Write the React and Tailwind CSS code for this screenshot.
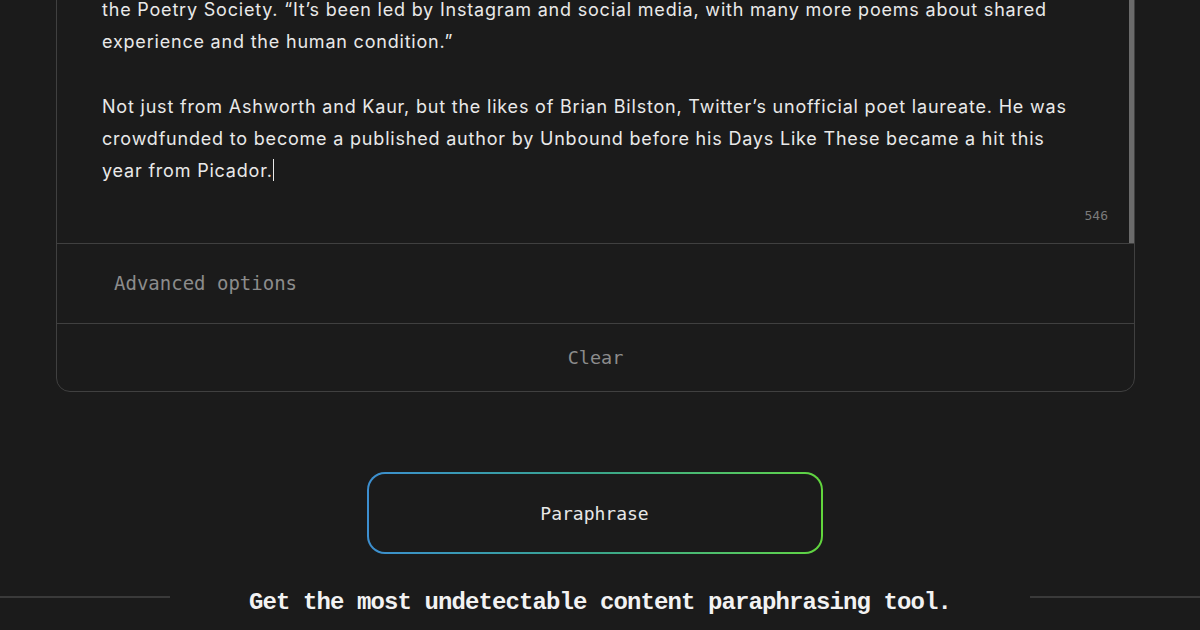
import React from 'react';

const mono = "font-['DejaVu_Sans_Mono','Liberation_Mono',monospace]";

export default function App() {
  return (
    <div className="w-[1200px] h-[630px] overflow-hidden bg-[#1b1b1b] font-['Inter','Noto_Sans',sans-serif]">
      <div className="ml-[56px] w-[1079px] -mt-[60px]">
        {/* editor panel */}
        <div className="rounded-b-[14px] border border-[#404040] bg-[#1b1b1b]">
          <div className="relative border-b border-[#404040] pl-[45px] pr-[30px] pt-[53px] pb-[56px]">
            <div className="text-[18px] leading-[32px] tracking-[0.8px] text-[#e9e9e9] whitespace-nowrap">
              <p>
                the Poetry Society. “It’s been led by Instagram and social media, with many more poems about shared
                <br />
                experience and the human condition.”
              </p>
              <p className="mt-[33px]">
                Not just from Ashworth and Kaur, but the likes of Brian Bilston, Twitter’s unofficial poet laureate. He was
                <br />
                crowdfunded to become a published author by Unbound before his Days Like These became a hit this
                <br />
                year from Picador.<span className="inline-block w-px h-[22px] bg-[#e9e9e9] align-[-4px]"></span>
              </p>
            </div>
            <span className={`absolute right-[26px] bottom-[18px] text-[13px] text-[#7a7a7a] ${mono}`}>546</span>
            <div className="absolute right-0 top-0 bottom-0 w-[5px] bg-[#6b6b6b]"></div>
          </div>
          <div className="h-[80px] flex items-center border-b border-[#404040] pl-[57px]">
            <span className={`text-[19px] text-[#8c8c8c] ${mono}`}>Advanced options</span>
          </div>
          <div className="h-[67px] flex items-center justify-center">
            <span className={`text-[18.5px] text-[#8c8c8c] ${mono}`}>Clear</span>
          </div>
        </div>

        {/* action button */}
        <div className="flex justify-center mt-[80px] -ml-[2px]">
          <div className="w-[456px] h-[82px] rounded-[18px] p-[2px] bg-gradient-to-r from-[#3d8fd0] via-[#3aa58a] to-[#62d63c]">
            <div className="w-full h-full rounded-[16px] bg-[#1b1b1b] flex items-center justify-center">
              <span className={`text-[18px] text-[#e8e8e8] ${mono}`}>Paraphrase</span>
            </div>
          </div>
        </div>
      </div>

      {/* tagline */}
      <div className="flex items-start mt-[32px]">
        <div className="w-[170px] h-[2px] mt-[10px] bg-[#3a3a3a]"></div>
        <p className="flex-1 text-center text-[24px] leading-[34px] tracking-[-0.9px] font-bold text-[#f2f2f2] font-['Liberation_Mono',monospace]">
          Get the most undetectable content paraphrasing tool.
        </p>
        <div className="w-[170px] h-[2px] mt-[10px] bg-[#3a3a3a]"></div>
      </div>
    </div>
  );
}
